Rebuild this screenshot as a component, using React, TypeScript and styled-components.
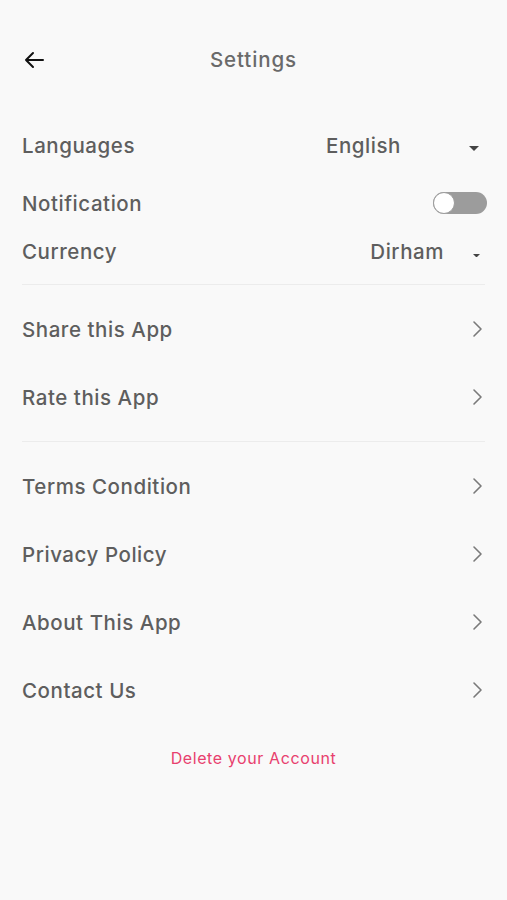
import React, { useState } from 'react';
import styled, { createGlobalStyle } from 'styled-components';

const colors = {
  background: '#f9f9f9',
  text: '#5e5e5e',
  title: '#6a6a6a',
  divider: '#ececec',
  chevron: '#7a7a7a',
  track: '#9c9c9c',
  danger: '#e8406e',
};

const GlobalStyle = createGlobalStyle`
  html, body {
    margin: 0;
    padding: 0;
    background: ${colors.background};
  }
  body {
    font-family: Inter, "Noto Sans", sans-serif;
    -webkit-font-smoothing: antialiased;
  }
`;

const Page = styled.div`
  min-height: 900px;
  background: ${colors.background};
  padding: 39px 22px 0 22px;
  box-sizing: border-box;
`;

const Header = styled.header`
  position: relative;
  height: 40px;
  display: flex;
  align-items: center;
  justify-content: center;
  margin-bottom: 42px;
`;

const BackButton = styled.button`
  position: absolute;
  left: 0;
  top: 9px;
  border: none;
  background: none;
  padding: 0;
  width: 26px;
  height: 24px;
  display: flex;
  align-items: center;
  cursor: pointer;
`;

const Title = styled.h1`
  margin: 0;
  font-size: 20.5px;
  font-weight: 500;
  color: ${colors.title};
  letter-spacing: 0.9px;
`;

const Row = styled.div<{ $height?: number; $spaceAfter?: number }>`
  height: ${(p) => p.$height ?? 48}px;
  margin-bottom: ${(p) => p.$spaceAfter ?? 0}px;
  display: flex;
  align-items: center;
  justify-content: space-between;
`;

const Label = styled.span`
  font-size: 20.5px;
  font-weight: 500;
  color: ${colors.text};
  letter-spacing: 0.55px;
`;

const Select = styled.div<{ $gap: number }>`
  display: flex;
  align-items: center;
  gap: ${(p) => p.$gap}px;
`;

const Divider = styled.hr`
  border: none;
  height: 1px;
  background: ${colors.divider};
  margin: 10px 0;
`;

const FirstDivider = styled(Divider)`
  margin-top: 9px;
`;

const Track = styled.button<{ $on: boolean }>`
  position: relative;
  width: 54px;
  height: 22px;
  border-radius: 11px;
  border: none;
  padding: 0;
  margin-right: -2px;
  background: ${(p) => (p.$on ? colors.danger : colors.track)};
  cursor: pointer;
`;

const Knob = styled.span<{ $on: boolean }>`
  position: absolute;
  top: 0;
  left: ${(p) => (p.$on ? 32 : 0)}px;
  width: 22px;
  height: 22px;
  border-radius: 50%;
  background: #fff;
  border: 1.5px solid ${colors.track};
  box-sizing: border-box;
`;

const NavRow = styled(Row).attrs({ $height: 68 })`
  cursor: pointer;
`;

const DeleteLink = styled.div`
  margin-top: 24px;
  text-align: center;
  line-height: 20px;
  font-size: 16px;
  color: ${colors.danger};
  letter-spacing: 0.6px;
`;

function Caret({ size }: { size: number }) {
  return (
    <svg width={size} height={size / 2} viewBox="0 0 10 5">
      <path d="M0 0 L10 0 L5 5 Z" fill="#444" />
    </svg>
  );
}

function Chevron() {
  return (
    <svg width="12" height="18" viewBox="0 0 12 18" style={{ marginRight: 2 }}>
      <path d="M3 2 L10 9 L3 16" fill="none" stroke={colors.chevron} strokeWidth="1.6" strokeLinecap="round" strokeLinejoin="round" />
    </svg>
  );
}

const firstGroup = ['Share this App', 'Rate this App'];
const secondGroup = ['Terms Condition', 'Privacy Policy', 'About This App', 'Contact Us'];

export default function App(): JSX.Element {
  const [notify, setNotify] = useState(false);

  return (
    <Page>
      <GlobalStyle />
      <Header>
        <BackButton aria-label="Back">
          <svg width="24" height="24" viewBox="0 0 24 24">
            <path d="M21 12 H4 M11 5 L4 12 L11 19" fill="none" stroke="#111" strokeWidth="2" strokeLinecap="round" strokeLinejoin="round" />
          </svg>
        </BackButton>
        <Title>Settings</Title>
      </Header>

      <Row $spaceAfter={10}>
        <Label>Languages</Label>
        <Select $gap={68}>
          <Label>English</Label>
          <span style={{ marginRight: 6 }}>
            <Caret size={10} />
          </span>
        </Select>
      </Row>
      <Row>
        <Label>Notification</Label>
        <Track $on={notify} onClick={() => setNotify(!notify)} aria-label="Notification">
          <Knob $on={notify} />
        </Track>
      </Row>
      <Row>
        <Label>Currency</Label>
        <Select $gap={29}>
          <Label>Dirham</Label>
          <span style={{ marginRight: 5 }}>
            <Caret size={7} />
          </span>
        </Select>
      </Row>

      <FirstDivider />
      {firstGroup.map((item) => (
        <NavRow key={item}>
          <Label>{item}</Label>
          <Chevron />
        </NavRow>
      ))}
      <Divider />
      {secondGroup.map((item) => (
        <NavRow key={item}>
          <Label>{item}</Label>
          <Chevron />
        </NavRow>
      ))}

      <DeleteLink>Delete your Account</DeleteLink>
    </Page>
  );
}
